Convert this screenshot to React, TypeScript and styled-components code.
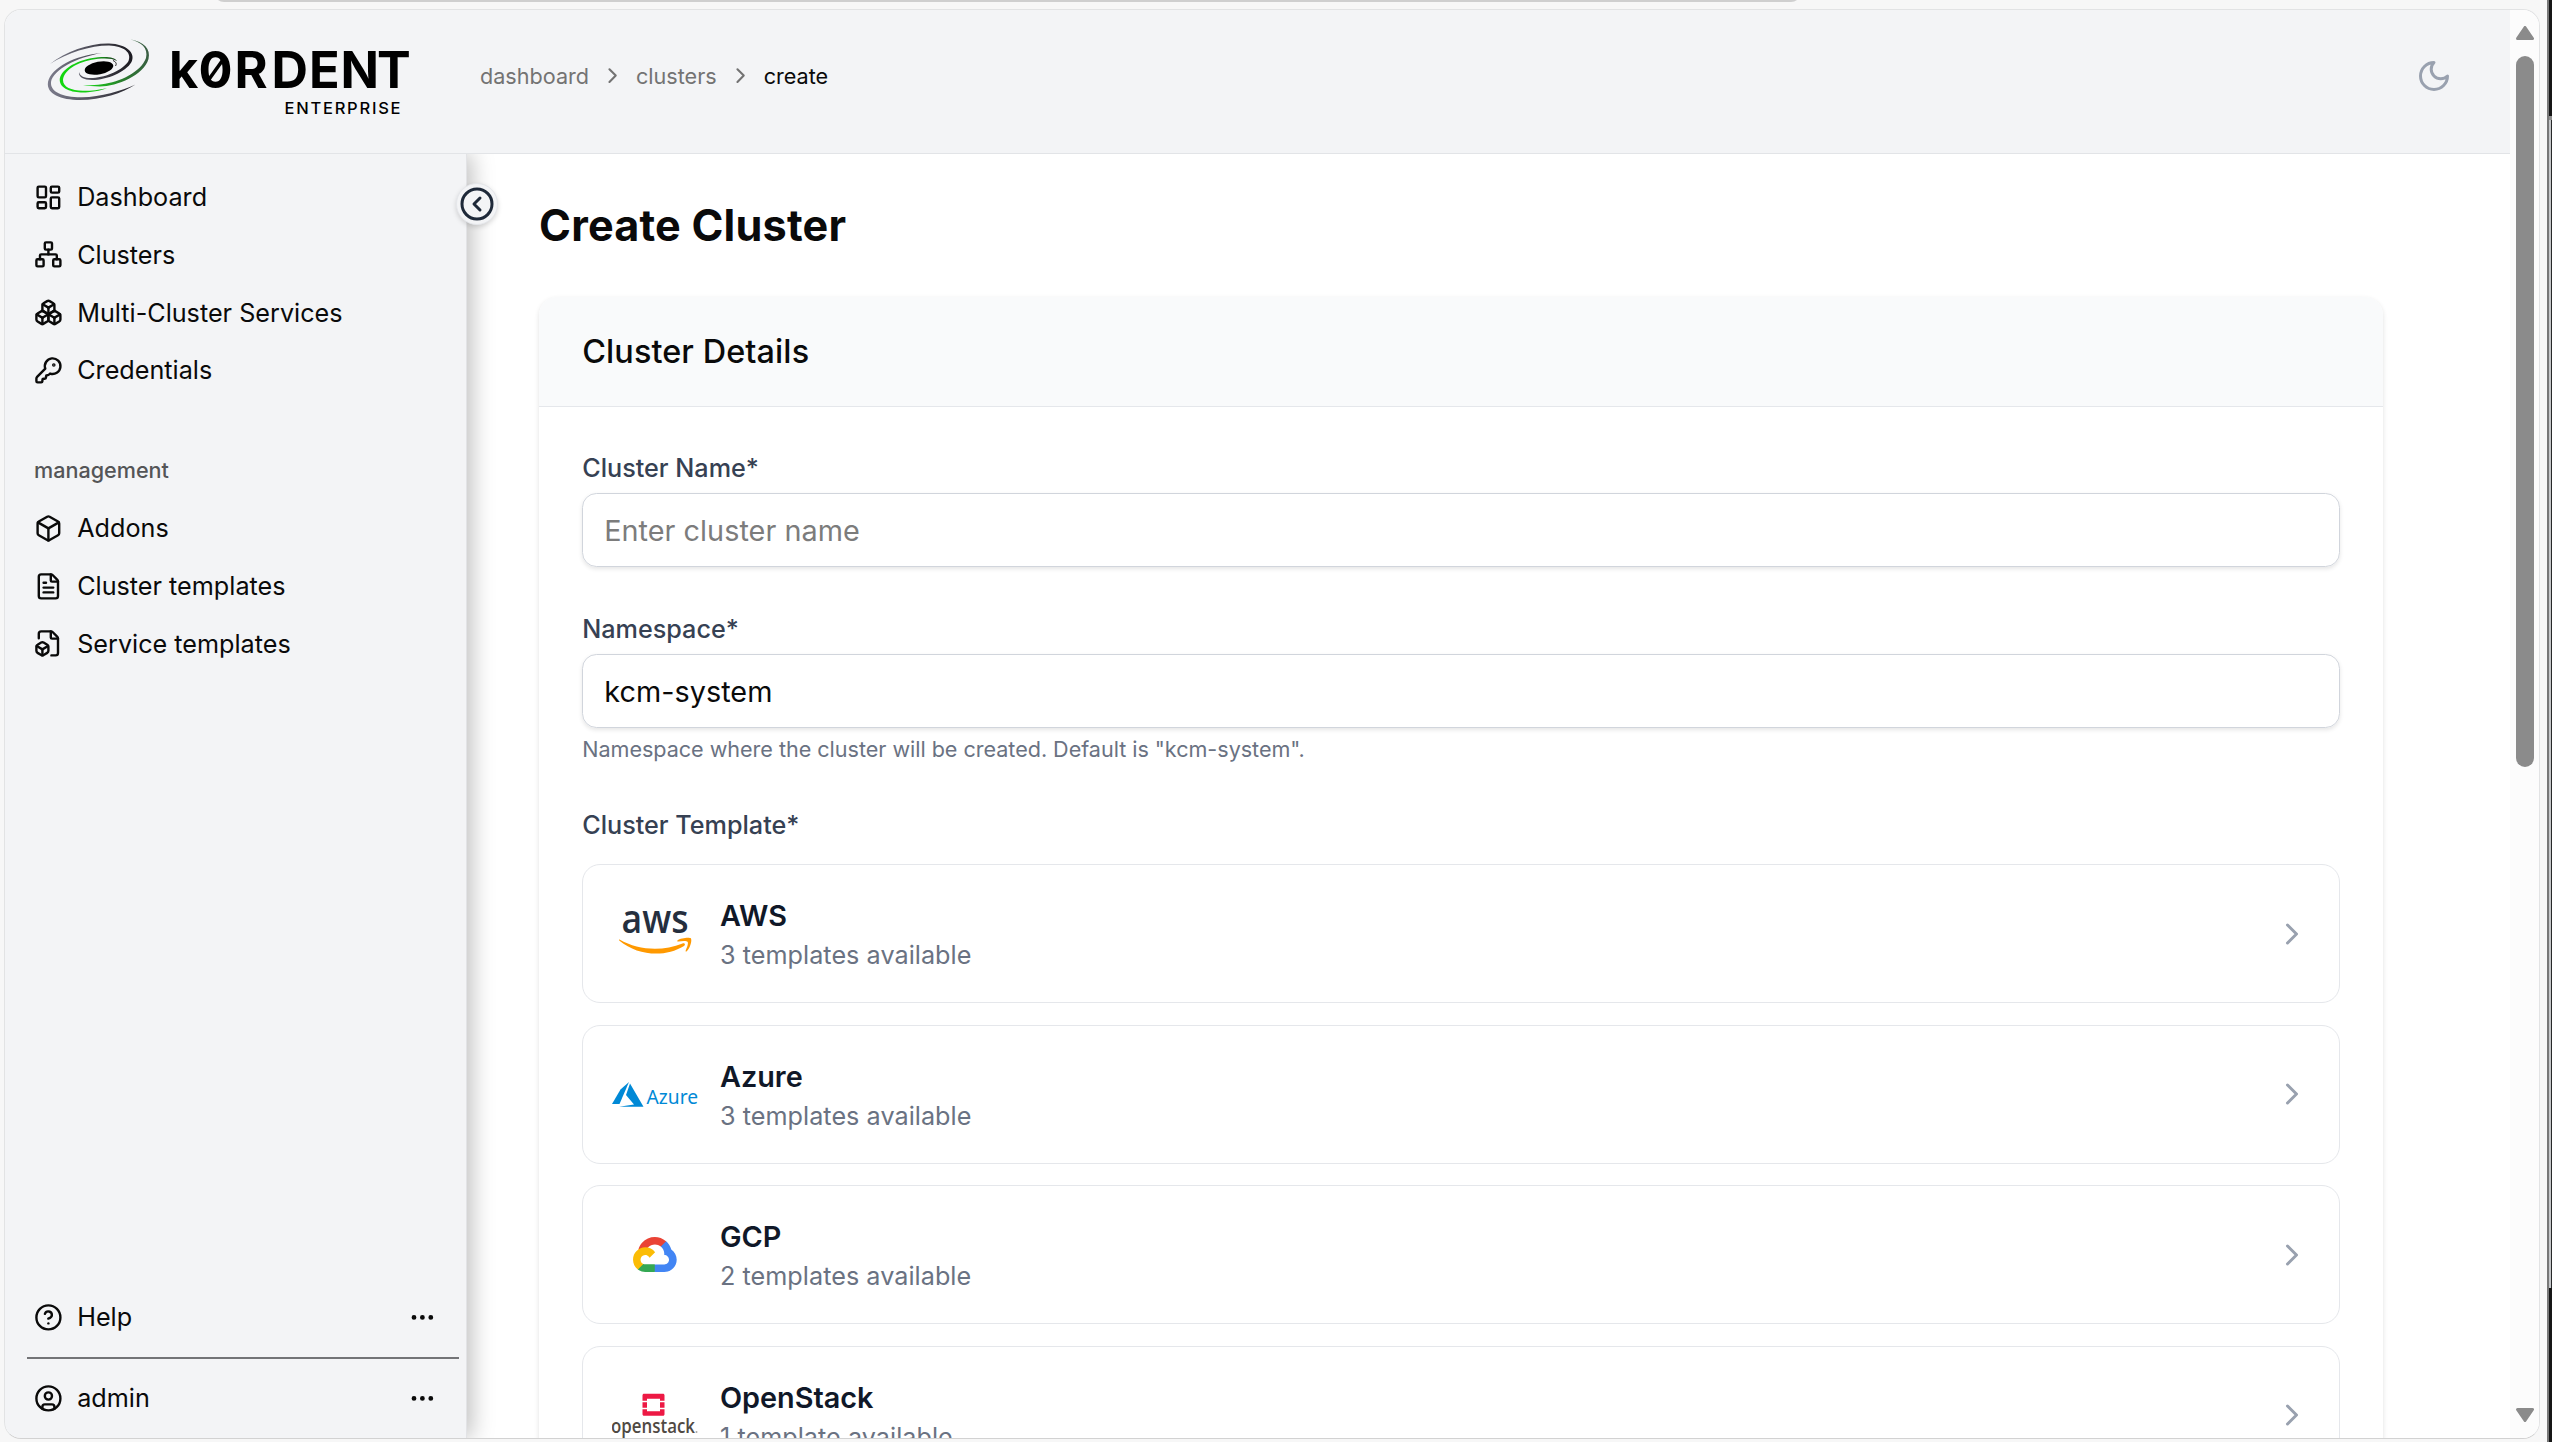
import React from "react";
import styled, { createGlobalStyle } from "styled-components";
import {
  LayoutDashboard, Network, Boxes, KeyRound, Box, FileText, FileBox,
  CircleHelp, CircleUser, Ellipsis, ChevronRight, CircleChevronLeft,
} from "lucide-react";

const Global = createGlobalStyle`
  *, *::before, *::after { box-sizing: border-box; }
  html, body { margin: 0; height: 100%; overflow: hidden; background: #f7f7f7; }
  body { font-family: Inter, "Liberation Sans", sans-serif; color: #0a0a0a; }
  h1, h2, p { margin: 0; font-weight: inherit; font-size: inherit; }
`;

const Desktop = styled.div`
  position: relative;
  width: 2552px;
  height: 1442px;
  padding: 9px 12px 4px 4px;
  display: flex;
  background: #f7f7f7;
  overflow: hidden;
`;
const AddressBarEdge = styled.div`
  position: absolute;
  left: 214px;
  top: -18px;
  width: 1587px;
  height: 20px;
  border-radius: 12px;
  background: #cfcfcf;
`;
const ScreenEdge = styled.div`
  position: absolute;
  right: 0;
  top: 0;
  width: 5px;
  height: 100%;
  border-left: 2px solid #777;
  background:
    linear-gradient(#161616, #161616) 0 0 / 100% 116px no-repeat,
    linear-gradient(#8e8e8e, #8e8e8e) 0 116px / 100% 4px no-repeat,
    linear-gradient(#161616, #161616) 0 1288px / 100% 154px no-repeat,
    linear-gradient(90deg, #c4c6c8 0 2px, #26282a 2px);
`;
const Window = styled.div`
  width: 2537px;
  height: 1430px;
  display: flex;
  overflow: hidden;
  border: 1px solid #e2e3e4;
  border-bottom-color: #d2d2d2;
  border-radius: 17px;
  background: #fff;
`;
const Page = styled.div`
  width: 2505px;
  display: flex;
  flex-direction: column;
`;
const Header = styled.header`
  height: 144px;
  flex: none;
  display: flex;
  align-items: flex-start;
  background: #f3f4f6;
  border-bottom: 1px solid #e2e4e7;
`;
const LogoBox = styled.div`
  width: 475px;
  height: 143px;
  svg { display: block; }
`;
const Crumbs = styled.nav`
  display: flex;
  align-items: center;
  gap: 10.9px;
  height: 130px;
  padding-top: 2px;
  font-size: 21.6px;
  color: #737373;
`;
const Crumb = styled.span<{ $current?: boolean }>`
  color: ${(p) => (p.$current ? "#0a0a0a" : "#737373")};
`;
const ThemeToggle = styled.div`
  margin-left: auto;
  margin-right: 58px;
  height: 132px;
  display: flex;
  align-items: center;
  color: #99a1af;
`;
const Body = styled.div`
  flex: 1;
  min-height: 0;
  display: flex;
`;
const Sidebar = styled.aside`
  position: relative;
  width: 462px;
  flex: none;
  display: flex;
  flex-direction: column;
  padding: 14.3px 7px 11px 22px;
  background: #f3f4f6;
  border-right: 1px solid #e2e3e6;
  box-shadow: 4px 0 22px rgba(0, 0, 0, 0.27);
  clip-path: inset(0 -60px 0 0);
`;
const CollapseButton = styled.div`
  position: absolute;
  right: -32px;
  top: 29px;
  width: 42px;
  height: 42px;
  border-radius: 50%;
  display: grid;
  place-items: center;
  background: #f3f4f6;
  border: 1px solid #e5e7eb;
  box-shadow: 0 2px 5px rgba(0, 0, 0, 0.15);
  color: #1e2939;
`;
const NavRow = styled.div`
  height: 57.7px;
  flex: none;
  display: flex;
  align-items: center;
  gap: 14.4px;
  padding: 0 22.2px 0 7px;
  font-size: 25.2px;
  font-weight: 400;
  svg { flex: none; }
`;
const NavLabel = styled.span`
  flex: 1;
`;
const GroupLabel = styled.div`
  margin-top: 42.2px;
  height: 57.6px;
  display: flex;
  align-items: center;
  padding-left: 7px;
  font-size: 21.6px;
  font-weight: 500;
  color: #545557;
`;
const ManagementItems = styled.div`
  padding-top: 0.6px;
`;
const SidebarFoot = styled.div`
  margin-top: auto;
`;
const Divider = styled.div`
  height: 2px;
  margin: 11px 0 10.4px;
  background: #737477;
`;
const Main = styled.main`
  flex: 1;
  padding: 43px 127px 0 72px;
  overflow: hidden;
`;
const Title = styled.h1`
  font-size: 43.2px;
  line-height: 57px;
  font-weight: 700;
  letter-spacing: 0.2px;
`;
const Card = styled.section`
  margin-top: 43px;
  height: 1400px;
  border-radius: 18px;
  overflow: hidden;
  background: #fff;
  box-shadow: 0 2px 5px rgba(0, 0, 0, 0.12);
`;
const CardHead = styled.div`
  height: 110px;
  display: flex;
  align-items: center;
  padding-left: 43.2px;
  background: #f9fafb;
  border-bottom: 1px solid #e5e7eb;
  font-size: 32.4px;
  font-weight: 500;
  letter-spacing: 0.1px;
`;
const CardBody = styled.div`
  padding: 43px 43.2px;
`;
const Label = styled.div`
  height: 36px;
  line-height: 36px;
  font-size: 25.2px;
  font-weight: 500;
  color: #364153;
`;
const Field = styled.div<{ $placeholder?: boolean }>`
  margin-top: 7px;
  height: 74px;
  display: flex;
  align-items: center;
  padding: 0 21px;
  border: 1px solid #d1d5dc;
  border-radius: 14.4px;
  box-shadow: 0 2px 4px rgba(0, 0, 0, 0.1);
  font-size: 28.8px;
  letter-spacing: 0.04px;
  color: ${(p) => (p.$placeholder ? "#7c7c7c" : "#0a0a0a")};
`;
const Hint = styled.p`
  margin-top: 7px;
  line-height: 28.8px;
  font-size: 21.6px;
  letter-spacing: -0.035px;
  color: #6a7282;
`;
const Group = styled.div<{ $gap: number }>`
  margin-bottom: ${(p) => p.$gap}px;
`;
const Providers = styled.div`
  margin-top: 21.4px;
  display: flex;
  flex-direction: column;
  gap: 21.6px;
`;
const Provider = styled.div`
  height: 139px;
  display: flex;
  align-items: center;
  padding: 0 29px;
  border: 1px solid #e5e7eb;
  border-radius: 18px;
`;
const ProviderLogo = styled.div`
  width: 87px;
  height: 87px;
  margin-right: 20.8px;
  svg { display: block; }
`;
const ProviderText = styled.div`
  flex: 1;
`;
const ProviderName = styled.div`
  font-size: 28.8px;
  line-height: 43px;
  font-weight: 600;
  color: #101828;
`;
const ProviderCount = styled.div`
  font-size: 25.2px;
  line-height: 36px;
  letter-spacing: 0.04px;
  color: #6a7282;
`;
const ScrollTrack = styled.div`
  flex: 1;
  display: flex;
  flex-direction: column;
  align-items: center;
  padding: 16px 0 16px;
  background: #fcfcfc;
`;
const ScrollThumb = styled.div`
  margin-top: 16px;
  width: 18px;
  height: 711px;
  border-radius: 9px;
  background: #8b8b8b;
`;
const DownArrow = styled.div`
  margin-top: auto;
  height: 14px;
  svg { display: block; }
`;

const LogoMark = () => (
  <svg width="475" height="143" viewBox="5 10 475 143" fill="none">
    <defs>
      <linearGradient id="g1" x1="50" y1="60" x2="132" y2="60" gradientUnits="userSpaceOnUse">
        <stop stopColor="#7c7c8c" /><stop offset="1" stopColor="#1b1a20" />
      </linearGradient>
      <linearGradient id="g2" x1="84" y1="80" x2="149" y2="50" gradientUnits="userSpaceOnUse">
        <stop stopColor="#14d314" /><stop offset="0.5" stopColor="#2a7a2e" /><stop offset="1" stopColor="#3a5c44" />
      </linearGradient>
      <linearGradient id="g3" x1="48" y1="90" x2="135" y2="85" gradientUnits="userSpaceOnUse">
        <stop stopColor="#7c7c8c" /><stop offset="1" stopColor="#26252c" />
      </linearGradient>
      <linearGradient id="g4" x1="60" y1="80" x2="117" y2="60" gradientUnits="userSpaceOnUse">
        <stop stopColor="#13d90f" /><stop offset="0.6" stopColor="#15c414" /><stop offset="1" stopColor="#1e3a22" />
      </linearGradient>
    </defs>
    <path d="M50 64C66 51 90 43 109 43.400C127 44 136 53 131.500 62C126 72 107 80 92 80C84 80 78 77 79 72C80 77 86 78.500 93 78C107 77 123 70 128.500 61C132 53 124 46 109 45.600C91 45.500 67 53 50 64Z" fill="url(#g1)" />
    <path d="M130 39.300C144 42 151 49 148.500 59C144 75 117 86.500 100 86.500C93 86.500 88 86 83 85.300C90 85.500 96 85 102 84.300C120 82 141 72 146 58C148.500 48 141 42 130 39.300Z" fill="url(#g2)" />
    <path d="M102 53C75 55 51 68 48 82C46 94 61 100 80 100C101 100 123 93 135.500 84.500C121 91 101 97 82 97.300C63 97.500 50 92 51 82C53 70 77 57 102 53Z" fill="url(#g3)" />
    <path d="M117 61C115 57 107 56.500 98 57.300C79 59 60 69 59.700 80C60 90 75 93.500 88 92.300C96 91.500 102 90 107 88.200C98 90 90 91 83 90.800C71 90.500 63 87 63 80C64 69 81 60.500 98 58.800C106 58 113 58.500 117 61Z" fill="url(#g4)" />
    <path d="M113 60.500C116 62 117 63.500 115.500 66" stroke="#222" strokeWidth="1" />
    <ellipse cx="99" cy="68" rx="14.500" ry="6.300" transform="rotate(-11 99 68)" fill="#000" />
    <text x="169 198.500 234.500 271.500 309 340.500 377" y="88" fontFamily="Inter, sans-serif" fontWeight="700" fontSize="50.500" fill="#000">k0RDENT</text>
    <path d="M208.500 80L223.500 59" stroke="#000" strokeWidth="3.500" />
    <text x="284.500" y="113.500" fontFamily="Inter, sans-serif" fontWeight="500" fontSize="16.500" textLength="116" fill="#000">ENTERPRISE</text>
  </svg>
);

const MoonIcon = () => (
  <svg width="36" height="36" viewBox="0 0 24 24" fill="none" stroke="currentColor" strokeWidth="2" strokeLinecap="round" strokeLinejoin="round">
    <path d="M12 3a6 6 0 0 0 9 9 9 9 0 1 1-9-9Z" />
  </svg>
);

const AwsLogo = () => (
  <svg width="87" height="87" viewBox="0 0 87 87">
    <text x="9.500" y="43.300" fontFamily="'Open Sans', sans-serif" fontWeight="600" fontSize="39" fill="#252f3e" textLength="67" lengthAdjust="spacingAndGlyphs">aws</text>
    <g transform="translate(0.500 1)">
      <path d="M7 48.500C26 59.500 50 60.500 70 52.500C72 51.700 73.500 53.500 71.500 55C52 67 25 64.500 7 49.700C6.300 49 6.500 48.200 7 48.500Z" fill="#ff9900" />
      <path d="M65 49.500C68 47.200 77 46 78.500 47.500C79.700 50 77.500 57 74.500 60C73.500 61 72.800 60.500 73.200 59.500C74.500 56.500 76 52.500 75.200 51C74 49.500 69 50.200 65.800 50.500C64.800 50.500 64.300 50 65 49.500Z" fill="#ff9900" />
    </g>
  </svg>
);
const AzureLogo = () => (
  <svg width="87" height="87" viewBox="0 0 87 87">
    <path d="M17 31L8.500 38.500L0 53H7.500Z" fill="#0089d6" />
    <path d="M18 32.500L14 44L22 53.500L7 55.700H31.500Z" fill="#0089d6" />
    <text x="34.500" y="53.200" fontFamily="'Noto Sans', sans-serif" fontSize="20" fill="#0089d6" textLength="51.500" lengthAdjust="spacingAndGlyphs">Azure</text>
  </svg>
);
const GcpLogo = () => (
  <svg width="87" height="87" viewBox="0 0 87 87">
    <g transform="translate(21 25.800) scale(0.1725)">
      <path fill="#ea4335" d="M161 56.700h7.700l22-22 1.100-9.400C150.900-10.800 88.500-7 52.300 33.900 42.300 45.300 34.900 58.800 31 73.500l7.900-1.100 44-7.300 3.400-3.500c19.600-21.500 52.700-24.400 75.300-6.100z" transform="translate(0 1)" />
      <path fill="#4285f4" d="M222 73.500c-5.100-18.600-15.500-35.400-30-48.200l-30.900 30.900c13 10.700 20.500 26.700 20.200 43.600v5.500c15.200 0 27.500 12.300 27.500 27.500s-12.300 27.200-27.500 27.200h-55l-5.400 5.900v33l5.400 5.200h55c39.500.3 71.700-31.400 72-70.900.2-23.900-11.600-46.300-31.400-59.700" />
      <path fill="#34a853" d="M71.400 203.800h54.900v-44H71.400c-3.900 0-7.800-.8-11.400-2.500l-7.900 2.400L30 181.600l-1.900 7.700c12.400 9.400 27.700 14.600 43.300 14.500" />
      <path fill="#fbbc05" d="M71.400 61.200C31.900 61.400 0 93.700.2 133.200c.1 22.100 10.400 42.900 27.900 56.400l31.900-31.900c-13.800-6.200-20-22.500-13.700-36.300 6.200-13.800 22.500-20 36.300-13.700 6.100 2.700 11 7.600 13.700 13.700l31.900-31.900c-13.600-17.700-34.600-28.100-56.800-28.300" />
    </g>
  </svg>
);
const OpenStackLogo = () => (
  <svg width="87" height="87" viewBox="0 0 87 87">
    <g transform="translate(0.500 -4.200)" fill="#ed1944">
      <path d="M30 33V27.500C30 26.600 30.700 26 31.500 26H50.500C51.400 26 52 26.600 52 27.500V33H47.500V31H34.500V33Z" />
      <path d="M30 41.500V46.500C30 47.400 30.700 48 31.500 48H50.500C51.400 48 52 47.400 52 46.500V41.500H47.500V43.500H34.500V41.500Z" />
      <path d="M30 34.500H34.500V40H30ZM47.500 34.500H52V40H47.500Z" />
    </g>
    <text x="-1" y="61.200" fontFamily="'Open Sans', sans-serif" fontWeight="600" fontSize="20" fill="#4f4943" textLength="84" lengthAdjust="spacingAndGlyphs">openstack</text>
    <circle cx="84.500" cy="60" r="1" fill="#aaa6a2" />
  </svg>
);

const primary = [
  { icon: LayoutDashboard, label: "Dashboard" },
  { icon: Network, label: "Clusters" },
  { icon: Boxes, label: "Multi-Cluster Services" },
  { icon: KeyRound, label: "Credentials" },
];
const management = [
  { icon: Box, label: "Addons" },
  { icon: FileText, label: "Cluster templates" },
  { icon: FileBox, label: "Service templates" },
];
const providers = [
  { logo: AwsLogo, name: "AWS", count: "3 templates available" },
  { logo: AzureLogo, name: "Azure", count: "3 templates available" },
  { logo: GcpLogo, name: "GCP", count: "2 templates available" },
  { logo: OpenStackLogo, name: "OpenStack", count: "1 template available" },
];

type Item = { icon: React.ElementType; label: string; more?: boolean };
const NavItem = ({ icon: Icon, label, more }: Item) => (
  <NavRow>
    <Icon size={28.8} />
    <NavLabel>{label}</NavLabel>
    {more && <Ellipsis size={28.8} />}
  </NavRow>
);

export default function App() {
  return (
    <>
      <Global />
      <Desktop>
        <AddressBarEdge />
        <Window>
          <Page>
            <Header>
              <LogoBox><LogoMark /></LogoBox>
              <Crumbs>
                <Crumb>dashboard</Crumb>
                <ChevronRight size={25.2} />
                <Crumb>clusters</Crumb>
                <ChevronRight size={25.2} />
                <Crumb $current>create</Crumb>
              </Crumbs>
              <ThemeToggle><MoonIcon /></ThemeToggle>
            </Header>
            <Body>
              <Sidebar>
                {primary.map((i) => <NavItem key={i.label} {...i} />)}
                <GroupLabel>management</GroupLabel>
                <ManagementItems>
                  {management.map((i) => <NavItem key={i.label} {...i} />)}
                </ManagementItems>
                <SidebarFoot>
                  <NavItem icon={CircleHelp} label="Help" more />
                  <Divider />
                  <NavItem icon={CircleUser} label="admin" more />
                </SidebarFoot>
                <CollapseButton><CircleChevronLeft size={36} /></CollapseButton>
              </Sidebar>
              <Main>
                <Title>Create Cluster</Title>
                <Card>
                  <CardHead>Cluster Details</CardHead>
                  <CardBody>
                    <Group $gap={44}>
                      <Label>Cluster Name*</Label>
                      <Field $placeholder>Enter cluster name</Field>
                    </Group>
                    <Group $gap={43}>
                      <Label>Namespace*</Label>
                      <Field>kcm-system</Field>
                      <Hint>Namespace where the cluster will be created. Default is "kcm-system".</Hint>
                    </Group>
                    <Label>Cluster Template*</Label>
                    <Providers>
                      {providers.map(({ logo: Logo, name, count }) => (
                        <Provider key={name}>
                          <ProviderLogo><Logo /></ProviderLogo>
                          <ProviderText>
                            <ProviderName>{name}</ProviderName>
                            <ProviderCount>{count}</ProviderCount>
                          </ProviderText>
                          <ChevronRight size={36} color="#99a1af" />
                        </Provider>
                      ))}
                    </Providers>
                  </CardBody>
                </Card>
              </Main>
            </Body>
          </Page>
          <ScrollTrack>
            <svg width="18" height="14" viewBox="0 0 18 14"><path d="M9 1.500L16.500 12.500H1.500Z" fill="#8b8b8b" stroke="#8b8b8b" strokeWidth="3" strokeLinejoin="round" /></svg>
            <ScrollThumb />
            <DownArrow>
              <svg width="18" height="14" viewBox="0 0 18 14"><path d="M9 12.500L16.500 1.500H1.500Z" fill="#8b8b8b" stroke="#8b8b8b" strokeWidth="3" strokeLinejoin="round" /></svg>
            </DownArrow>
          </ScrollTrack>
        </Window>
        <ScreenEdge />
      </Desktop>
    </>
  );
}
